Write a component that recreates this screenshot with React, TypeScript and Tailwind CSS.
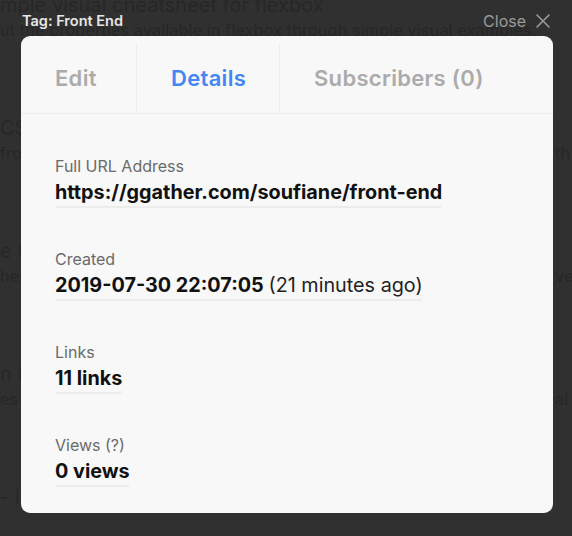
import React from "react";

const bgItems = [
  { title: "CSS Tricks guide", desc: "from the basics", descR: "th" },
  { title: "e Complete Guide", desc: "hen to use grid", descR: "ver" },
  { title: "n the flexbox", desc: "es and examples", descR: "al" },
  { title: "- learn it all", desc: "", descR: "" },
];

function Field({ label, children }: { label: string; children: React.ReactNode }) {
  return (
    <div className="flex flex-col items-start">
      <div className="text-[16px] leading-[22px] mb-[2px] text-[#6a6a6a]">{label}</div>
      <div className="text-[19.8px] leading-[26px] font-bold text-[#111] pb-[1px] border-b-2 border-[#ececec] rounded-[3px] whitespace-nowrap">
        {children}
      </div>
    </div>
  );
}

export default function App() {
  return (
    <div
      className="relative w-[572px] h-[536px] overflow-hidden bg-[#303030]"
      style={{ fontFamily: "Inter, 'Noto Sans', sans-serif" }}
    >
      {/* page behind overlay */}
      <div className="flex flex-col text-[#272727] select-none -mt-[7px]">
        <div className="flex flex-col gap-[2px]">
          <div className="text-[20px] leading-[24px] whitespace-nowrap">mple visual cheatsheet for flexbox</div>
          <div className="text-[16.5px] leading-[22px] whitespace-nowrap">ut the properties available in flexbox through simple visual examples.</div>
        </div>
        <div className="flex flex-col mt-[75px] gap-[75px]">
          {bgItems.map((it, i) => (
            <div key={i} className="flex flex-col gap-[2px]">
              <div className="text-[20px] leading-[24px] whitespace-nowrap">{it.title}</div>
              <div className="flex justify-between text-[16.5px] leading-[22px] whitespace-nowrap">
                <span>{it.desc}</span>
                <span className="w-[17px] overflow-hidden">{it.descR}</span>
              </div>
            </div>
          ))}
        </div>
      </div>

      {/* overlay */}
      <div className="absolute inset-0 flex flex-col px-[21px]">
        <div className="h-[36px] pt-[5px] flex items-center justify-between pl-[1px] pr-[1px]">
          <span className="text-[14.5px] font-semibold text-[#e6e6e6]">Tag: Front End</span>
          <span className="flex items-center gap-[10px] text-[16px] text-[#9a9a9a]">
            Close
            <svg width="14" height="14" viewBox="0 0 14 14" fill="none" stroke="#9a9a9a" strokeWidth="1.6" strokeLinecap="round">
              <path d="M1 1 L13 13 M13 1 L1 13" />
            </svg>
          </span>
        </div>
        <div className="w-[532px] h-[477px] bg-[#f8f8f8] rounded-[9px] flex flex-col">
          <div className="h-[78px] pt-[8px] flex border-b border-[#ececec] text-[22px] tracking-[0.3px] font-semibold">
            <div className="w-[116px] flex items-center pl-[34px] border-r border-[#ececec] text-[#ababab]">Edit</div>
            <div className="w-[143px] flex items-center pl-[34px] border-r border-[#ececec] text-[#4386f4]">Details</div>
            <div className="flex items-center pl-[34px] text-[#ababab]">Subscribers (0)</div>
          </div>
          <div className="flex flex-col px-[34px] pt-[41px] gap-[40px]">
            <Field label="Full URL Address">https://ggather.com/soufiane/front-end</Field>
            <Field label="Created">
              2019-07-30 22:07:05 <span className="font-normal text-[#222]">(21 minutes ago)</span>
            </Field>
            <Field label="Links">11 links</Field>
            <Field label="Views (?)">0 views</Field>
          </div>
        </div>
      </div>
    </div>
  );
}
